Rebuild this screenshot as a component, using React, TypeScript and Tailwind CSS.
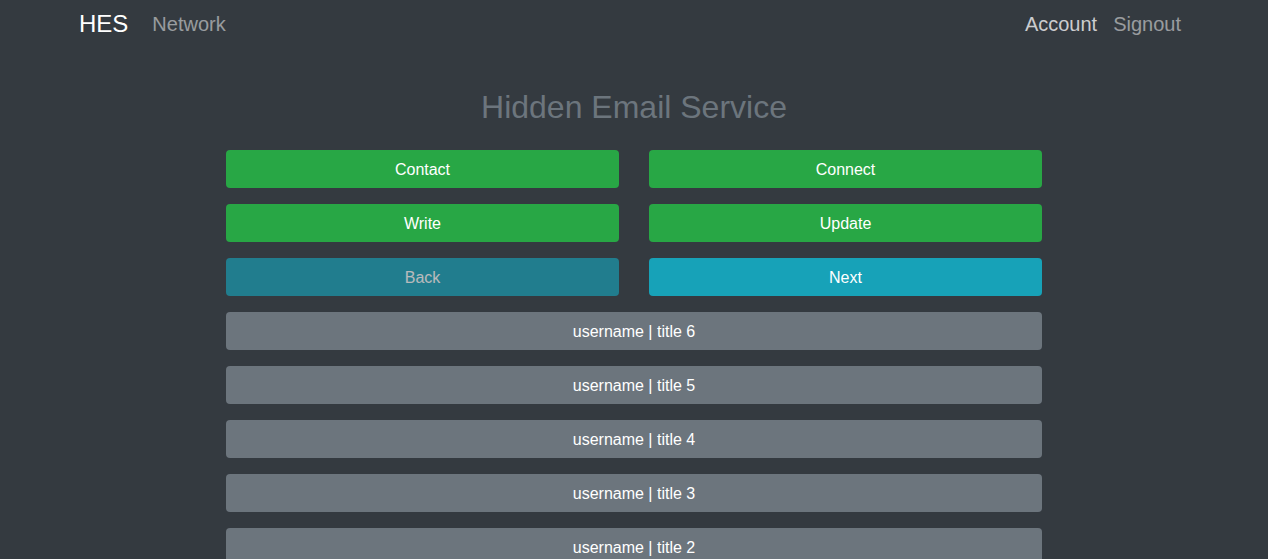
import type { ReactNode } from 'react';

const messages = [6, 5, 4, 3, 2, 1];

function ActionButton({ children, tone = 'green', disabled = false }: { children: ReactNode; tone?: 'green' | 'info'; disabled?: boolean }) {
  const color = tone === 'green' ? 'bg-[#28a745]' : 'bg-[#17a2b8]';
  return (
    <button
      disabled={disabled}
      className={`h-[38px] w-full rounded pt-[2px] text-[16px] text-white ${color} ${disabled ? 'opacity-65' : ''}`}
    >
      {children}
    </button>
  );
}

export default function App() {
  return (
    <div className="min-h-screen bg-[#343a40] font-['Liberation_Sans',Arial,sans-serif]">
      <nav className="h-12">
        <div className="mx-auto flex h-full max-w-[1140px] items-center justify-between px-[15px]">
          <div className="flex items-center">
            <span className="mr-4 text-[24px] text-white">HES</span>
            <a className="px-2 text-[20px] text-white/50">Network</a>
          </div>
          <div className="flex items-center">
            <a className="px-2 text-[20px] text-white/75">Account</a>
            <a className="px-2 text-[20px] text-white/50">Signout</a>
          </div>
        </div>
      </nav>

      <main className="mx-auto w-[816px] pt-10">
        <h1 className="mb-6 text-center text-[32px] leading-[1.2] text-[#6c757d]">Hidden Email Service</h1>

        <div className="grid grid-cols-2 gap-x-[30px] gap-y-4">
          <ActionButton>Contact</ActionButton>
          <ActionButton>Connect</ActionButton>
          <ActionButton>Write</ActionButton>
          <ActionButton>Update</ActionButton>
          <ActionButton tone="info" disabled>Back</ActionButton>
          <ActionButton tone="info">Next</ActionButton>
        </div>

        <div className="mt-4 flex flex-col gap-4">
          {messages.map((n) => (
            <button key={n} className="h-[38px] w-full rounded bg-[#6c757d] pt-[2px] text-[16px] text-white">
              username | title {n}
            </button>
          ))}
        </div>
      </main>
    </div>
  );
}
